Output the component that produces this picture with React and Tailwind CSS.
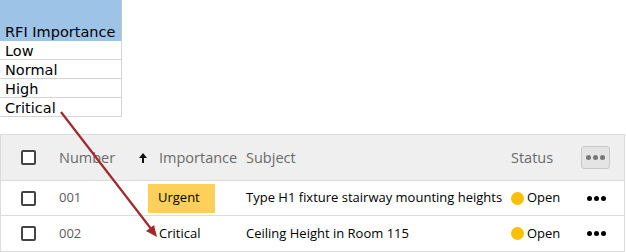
import React from "react";

const font = { fontFamily: '"Open Sans", sans-serif' };
const sheetFont = { fontFamily: '"DejaVu Sans", sans-serif' };

function Checkbox() {
  return <div className="w-[15px] h-[15px] border-2 border-[#444] rounded-[2px] bg-white" />;
}

function Dots({ color = "bg-black" }) {
  return (
    <div className="flex gap-[2px]">
      <span className={`w-[5px] h-[5px] rounded-full ${color}`} />
      <span className={`w-[5px] h-[5px] rounded-full ${color}`} />
      <span className={`w-[5px] h-[5px] rounded-full ${color}`} />
    </div>
  );
}

const rows = [
  { num: "001", imp: "Urgent", badge: true, subject: "Type H1 fixture stairway mounting heights" },
  { num: "002", imp: "Critical", badge: false, subject: "Ceiling Height in Room 115" },
];

function App() {
  return (
    <div className="relative w-[626px] h-[252px] bg-white overflow-hidden" style={font}>
      {/* spreadsheet */}
      <div className="w-[122px] text-[14.5px] leading-none text-black whitespace-nowrap" style={sheetFont}>
        <div className="h-[41px] bg-[#9dc3e6] flex items-end pl-[5px] pb-[2px] border-r border-[#c6c6c6]">RFI Importance</div>
        {["Low", "Normal", "High", "Critical"].map((t) => (
          <div key={t} className="h-[19px] flex items-end pl-[5px] pb-[1px] border-b border-r border-[#d4d4d4]">
            {t}
          </div>
        ))}
      </div>

      {/* table */}
      <div className="mt-[17px] w-[625px] border border-[#dcdcdc] text-[13px]">
        <div className="h-[46px] bg-[#efefef] flex items-center text-[14.5px] text-[#6a6a6a] border-b border-[#dcdcdc]">
          <div className="w-[58px] pl-[20px]"><Checkbox /></div>
          <div className="w-[80px]">Number</div>
          <div className="w-[20px] flex items-center">
            <svg width="8" height="10" viewBox="0 0 8 10">
              <polygon points="4,0 8,5 0,5" fill="#111" />
              <rect x="3" y="4" width="2" height="6" fill="#111" />
            </svg>
          </div>
          <div className="w-[87px]">Importance</div>
          <div className="w-[265px]">Subject</div>
          <div className="w-[70px]">Status</div>
          <div className="w-[29px] h-[23px] border border-[#c8c8c8] rounded-[3px] bg-[#e4e4e4] flex items-center justify-center">
            <Dots color="bg-[#777]" />
          </div>
        </div>
        {rows.map((r, i) => (
          <div key={r.num} className={`h-[35px] flex items-center text-black ${i === 0 ? "border-b border-[#dcdcdc]" : ""}`}>
            <div className="w-[58px] pl-[20px]"><Checkbox /></div>
            <div className="w-[89px] text-[#5a5a5a]">{r.num}</div>
            <div className="w-[98px]">
              {r.badge ? (
                <span className="inline-flex items-center h-[29px] w-[67px] pl-[10px] bg-[#fdd05a]">{r.imp}</span>
              ) : (
                <span className="pl-[11px]">{r.imp}</span>
              )}
            </div>
            <div className="w-[265px]">{r.subject}</div>
            <div className="w-[76px] flex items-center gap-[3px]">
              <span className="w-[13px] h-[13px] rounded-full bg-[#f9c000]" />
              Open
            </div>
            <Dots />
          </div>
        ))}
      </div>

      {/* arrow */}
      <svg className="absolute inset-0 pointer-events-none" width="626" height="252">
        <line x1="61" y1="112" x2="152" y2="230" stroke="#a3282b" strokeWidth="2.2" />
        <polygon points="157,237 146,231 154,225" fill="#a3282b" />
      </svg>
    </div>
  );
}

export default App;
